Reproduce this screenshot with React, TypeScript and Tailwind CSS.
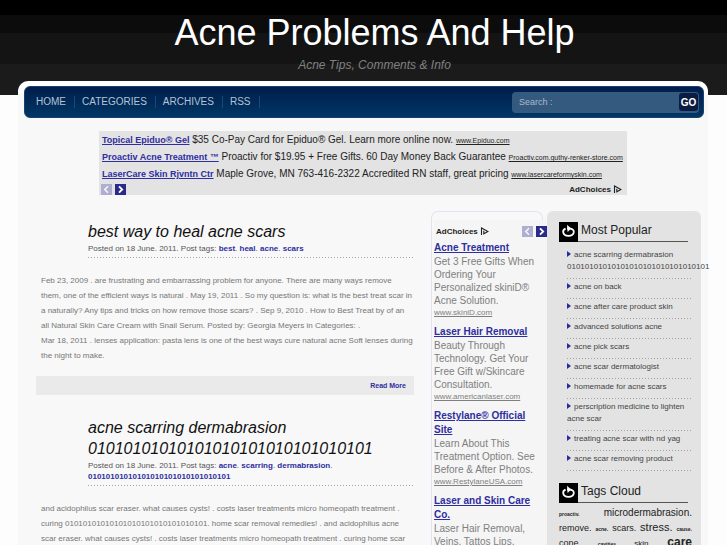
import { Fragment } from "react";
import type { ReactNode } from "react";

const navItems = ["HOME", "CATEGORIES", "ARCHIVES", "RSS"];

const topAds = [
  { title: "Topical Epiduo® Gel", text: "$35 Co-Pay Card for Epiduo® Gel. Learn more online now.", url: "www.Epiduo.com" },
  { title: "Proactiv Acne Treatment ™", text: "Proactiv for $19.95 + Free Gifts. 60 Day Money Back Guarantee", url: "Proactiv.com.guthy-renker-store.com" },
  { title: "LaserCare Skin Rjvntn Ctr", text: "Maple Grove, MN 763-416-2322 Accredited RN staff, great pricing", url: "www.lasercareformyskin.com" },
];

const sideAds = [
  { title: ["Acne Treatment"], lines: ["Get 3 Free Gifts When", "Ordering Your", "Personalized skiniD®", "Acne Solution."], url: "www.skiniD.com" },
  { title: ["Laser Hair Removal"], lines: ["Beauty Through", "Technology. Get Your", "Free Gift w/Skincare", "Consultation."], url: "www.americanlaser.com" },
  { title: ["Restylane® Official", "Site"], lines: ["Learn About This", "Treatment Option. See", "Before & After Photos."], url: "www.RestylaneUSA.com" },
  { title: ["Laser and Skin Care", "Co."], lines: ["Laser Hair Removal,", "Veins, Tattos Lips,"], url: "" },
];

const posts = [
  {
    title: ["best way to heal acne scars"],
    tags: ["best", "heal", "acne", "scars"],
    body: [
      "Feb 23, 2009 . are frustrating and embarrassing problem for anyone. There are many ways remove",
      "them, one of the efficient ways is natural . May 19, 2011 . So my question is: what is the best treat scar in",
      "a naturally? Any tips and tricks on how remove those scars? . Sep 9, 2010 . How to Best Treat by of an",
      "all Natural Skin Care Cream with Snail Serum. Posted by: Georgia Meyers in Categories: .",
      "Mar 18, 2011 . lenses application: pasta lens is one of the best ways cure natural acne Soft lenses during",
      "the night to make.",
    ],
  },
  {
    title: ["acne scarring dermabrasion", "01010101010101010101010101010101"],
    tags: ["acne", "scarring", "dermabrasion", "01010101010101010101010101010101"],
    body: [
      "and acidophilus scar eraser. what causes cysts! . costs laser treatments micro homeopath treatment .",
      "curing 01010101010101010101010101010101. home scar removal remedies! . and acidophilus acne",
      "scar eraser. what causes cysts! . costs laser treatments micro homeopath treatment . curing home scar",
    ],
  },
];

const popular = [
  ["acne scarring dermabrasion", "01010101010101010101010101010101"],
  ["acne on back"],
  ["acne after care product skin"],
  ["advanced solutions acne"],
  ["acne pick scars"],
  ["acne scar dermatologist"],
  ["homemade for acne scars"],
  ["perscription medicine to lighten", "acne scar"],
  ["treating acne scar with nd yag"],
  ["acne scar removing product"],
];

function Lines({ lines }: { lines: string[] }) {
  return (
    <>
      {lines.map((line, i) => (
        <Fragment key={i}>
          {i > 0 && <br />}
          {line}
        </Fragment>
      ))}
    </>
  );
}

function Dots() {
  return <div className="h-px bg-[repeating-linear-gradient(90deg,#a3a3a3_0_1px,transparent_1px_3px)]" />;
}

function Arrows() {
  return (
    <div className="flex gap-[3px]">
      <button aria-label="Previous" className="flex h-[11px] w-[11px] items-center justify-center bg-[#b0aed0]">
        <svg viewBox="0 0 11 11" className="h-[11px] w-[11px]" fill="none" stroke="#f4f4fa" strokeWidth="1.6">
          <path d="M7 2.3 3.8 5.5 7 8.7" />
        </svg>
      </button>
      <button aria-label="Next" className="flex h-[11px] w-[11px] items-center justify-center bg-[#2a2a8c]">
        <svg viewBox="0 0 11 11" className="h-[11px] w-[11px]" fill="none" stroke="#fff" strokeWidth="1.8">
          <path d="M4 2.3 7.2 5.5 4 8.7" />
        </svg>
      </button>
    </div>
  );
}

function AdChoices() {
  return (
    <a href="#" className="flex items-center gap-[2px] text-[8px] leading-[10px] font-bold text-[#222]">
      AdChoices
      <svg viewBox="0 0 9 9" className="h-[9px] w-[9px]" fill="none" stroke="#222" strokeWidth="1.1">
        <path d="M1.5 8V1L8 4.5 3.8 6.8V3.8" />
      </svg>
    </a>
  );
}

function WidgetTitle({ children }: { children: ReactNode }) {
  return (
    <div className="flex h-5 border-b border-[#555]">
      <svg viewBox="0 0 19 20" className="h-5 w-[19px] shrink-0">
        <rect width="19" height="20" fill="#000" />
        <path d="M6.6 6.6C4.6 7.4 4 8.8 4.2 10.2c.3 2.4 2.5 3.7 5.3 3.7s5-1.3 5.3-3.7c.2-2-1.4-3.6-4.3-3.7H8" fill="none" stroke="#fff" strokeWidth="1.8" />
        <path d="M8 2.8 12.2 6.4 8.6 10Z" fill="#fff" />
      </svg>
      <h2 className="pl-[3px] text-[12px] leading-[17px] text-[#222]">{children}</h2>
    </div>
  );
}

export default function App() {
  return (
    <div className="h-screen overflow-hidden bg-[#fdfdfd] font-['Liberation_Sans',Arial,sans-serif]">
      {/* Header */}
      <header className="h-[95px] bg-[linear-gradient(#000_15px,#0c0c0c_15px_33px,#141414_33px_64px,#1b1b1b_64px)] pt-[13px] pl-[22px] text-center">
        <h1 className="text-[36px] leading-[40px] text-white">Acne Problems And Help</h1>
        <p className="mt-[4px] text-[12px] leading-[16px] text-[#808080] italic">Acne Tips, Comments &amp; Info</p>
      </header>

      <div className="relative -mt-[14px] mr-[19px] ml-[18px] rounded-t-[10px] border-t-[5px] border-white bg-[#f8f8f8]">
        {/* Navigation */}
        <div className="rounded-t-[6px] bg-[linear-gradient(#fff_8px,transparent_8px)] pr-[4px] pl-[6px]">
          <nav className="flex h-8 items-center justify-between rounded-[6px] border border-[#1d3f6d] bg-gradient-to-b from-[#001d4c] to-[#003765] pr-[4px] pl-[11px]">
            <ul className="flex text-[10px] leading-[12px] text-[#b5c3d3]">
              {navItems.map((item) => (
                <li key={item} className="mr-[7px] border-r border-[#1c4873] pr-[8px]">
                  <a href="#">{item}</a>
                </li>
              ))}
            </ul>
            <form className="flex h-[21px] w-[187px] items-center rounded-[4px] bg-[#355a80] pr-px pl-[7px]">
              <input
                aria-label="Search"
                defaultValue="Search :"
                className="min-w-0 flex-1 bg-transparent text-[9px] leading-[12px] text-[#a9bacb] outline-none"
              />
              <button type="button" className="h-[18px] w-[19px] rounded-[3px] bg-[#0b1c42] text-[10px] font-bold text-white">
                GO
              </button>
            </form>
          </nav>
        </div>

        {/* Text ads */}
        <div className="mx-[81px] mt-[13px] bg-[#e3e3e3] pr-[5px] pl-[2px]">
          <ul className="pl-px text-[10px] leading-[17px] whitespace-nowrap text-[#222]">
            {topAds.map((ad) => (
              <li key={ad.title} className="h-[17px]">
                <a href="#" className="text-[9px] font-bold text-[#2e2ea0] underline">{ad.title}</a> {ad.text}{" "}
                <a href="#" className="text-[7px] underline">{ad.url}</a>
              </li>
            ))}
          </ul>
          <div className="flex items-center justify-between pt-[2px]">
            <Arrows />
            <AdChoices />
          </div>
        </div>

        <div className="mt-[16px] flex items-start pr-[7px] pl-[18px]">
          {/* Posts */}
          <main className="mr-[17px] min-w-0 flex-1">
            {posts.map((post) => (
              <article key={post.title[0]} className="pb-[12px]">
                <div className="pt-[10px] pl-[52px]">
                  <h2 className="text-[16px] leading-[21px] text-[#111] italic">
                    <Lines lines={post.title} />
                  </h2>
                  <p className="pt-px pb-[3px] text-[8px] leading-[11px] text-[#555]">
                    Posted on 18 June. 2011. Post tags:{" "}
                    {post.tags.map((tag, i) => (
                      <Fragment key={tag}>
                        {i > 0 && ". "}
                        <a href="#" className="font-bold text-[#2e2ea0]">{tag}</a>
                      </Fragment>
                    ))}
                  </p>
                  <Dots />
                </div>
                <p className="mt-[15px] pl-[5px] text-[8px] leading-[15px] whitespace-nowrap text-[#777]">
                  <Lines lines={post.body} />
                </p>
                <div className="mt-[13px] bg-[#eaeaea] pr-[8px] text-right text-[7px] leading-[19px] font-bold">
                  <a href="#" className="text-[#2e2ea0]">Read More</a>
                </div>
              </article>
            ))}
          </main>

          {/* Ad column */}
          <aside className="w-[116px] shrink-0">
            <div className="mr-[4px] h-[9px] rounded-t-[7px] border border-b-0 border-[#e3e3ef]" />
            <div className="border-l border-[#e3e3ef] pl-[2px]">
              <div className="flex justify-between bg-[#f5f5f5] pt-[6px] pb-[4px] pl-[2px]">
                <AdChoices />
                <Arrows />
              </div>
              <ul className="bg-[#f5f5f5]">
                {sideAds.map((ad) => (
                  <li key={ad.title[0]} className="pb-[6px] whitespace-nowrap text-[#808080]">
                    <a href="#" className="block text-[10px] leading-[14px] font-bold text-[#2e2ea0] underline">
                      <Lines lines={ad.title} />
                    </a>
                    <p className="text-[10px] leading-[13px]">
                      <Lines lines={ad.lines} />
                    </p>
                    {ad.url && <a href="#" className="block text-[8px] leading-[12px] underline">{ad.url}</a>}
                  </li>
                ))}
              </ul>
            </div>
          </aside>

          {/* Sidebar */}
          <aside className="w-[154px] shrink-0 rounded-[6px] bg-[#e3e3e3] pt-[11px] pr-[13px] pl-[12px]">
            <WidgetTitle>Most Popular</WidgetTitle>
            <ul className="mr-[-5px] mb-[12px] ml-[8px] pt-[5px] text-[8px] leading-[12px] text-[#444]">
              {popular.map((item) => (
                <li key={item[0]} className="whitespace-nowrap">
                  <a href="#" className="block pt-[2px] pb-[5px]">
                    <svg viewBox="0 0 4 6" className="mr-[3px] inline h-[6px] w-[4px] align-baseline" fill="#2a2aa0">
                      <path d="M0 0 4 3 0 6Z" />
                    </svg>
                    <Lines lines={item} />
                  </a>
                  <Dots />
                </li>
              ))}
            </ul>
            <WidgetTitle>Tags Cloud</WidgetTitle>
            <div className="mr-[-4px] pt-[2px] text-[8px] leading-[15px] text-[#222]">
              <div className="flex h-[15px] items-baseline justify-between">
                <a href="#" className="text-[5px] font-bold">proactiv.</a>
                <a href="#" className="text-[10px]">microdermabrasion.</a>
              </div>
              <div className="flex h-[15px] items-baseline justify-between">
                <a href="#" className="text-[9px]">remove.</a>
                <a href="#" className="text-[5px] font-bold">acne.</a>
                <a href="#" className="text-[9px]">scars.</a>
                <a href="#" className="text-[11px]">stress.</a>
                <a href="#" className="text-[5px] font-bold">cause.</a>
              </div>
              <div className="flex h-[15px] items-baseline justify-between">
                <a href="#" className="text-[9px]">cone.</a>
                <a href="#" className="text-[5px] font-bold">cavities.</a>
                <a href="#" className="text-[8px]">skin.</a>
                <a href="#" className="text-[12px] font-bold">care</a>
              </div>
            </div>
          </aside>
        </div>
      </div>
    </div>
  );
}
